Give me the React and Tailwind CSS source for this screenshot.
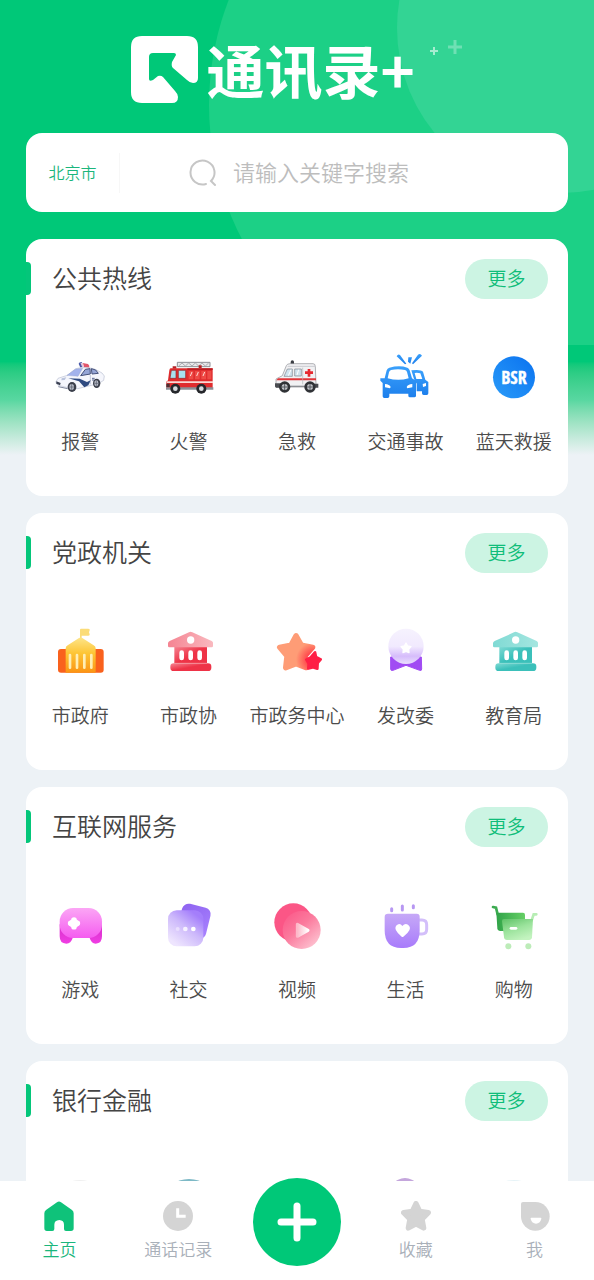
import { useState } from "react";

function PoliceCar() {
  return (
    <svg viewBox="0 0 150 150" className="size-[50px]">
      <path d="M71 32q1-5 8-5 4 1 5 14l-8 3z" fill="#4858a8" />
      <path d="M83 30l16 3q5 4 4 11l-16-1z" fill="#e2556a" />
      <path d="M76 29l8 2 3 11-5 1z" fill="#e9c9da" />
      <path
        d="M3 86l6-10 28-9 24-19c14-6 44-6 62 2l18 10 7 9-2 13-16 10-62 15-26-2-32-8-6-5z"
        fill="#f5f6fc"
        stroke="#b9c0d2"
        strokeWidth="2"
      />
      <path d="M36 67l26-19 21-2-14 24z" fill="#a3b3ec" stroke="#8a97c4" strokeWidth="1" />
      <path d="M77 68l14-19 14-2 1 16zM109 47l13 4 8 10-19 2z" fill="#95a5d6" stroke="#46527c" strokeWidth="3" />
      <path d="M40 76l34 1 22 10 12-6-8 16-12 6-16-18z" fill="#2f4a80" />
      <path d="M106 66v28" stroke="#a9b2c8" strokeWidth="2" />
      <path d="M111 76h8M111 81h7" stroke="#59658f" strokeWidth="3" />
      <path d="M4 85l13 5-2 7-11-5z" fill="#3a4052" />
      <path d="M20 76l14-3-5 8-10 1z" fill="#b9c3dc" />
      <path d="M10 101l28 6" stroke="#7d859b" strokeWidth="3" />
      <ellipse cx="51" cy="102" rx="13" ry="15" fill="#3b3f4b" />
      <ellipse cx="50" cy="102" rx="7" ry="9" fill="#b9bdc9" />
      <path d="M50 93v18M43 102h14" stroke="#555a68" strokeWidth="2" />
      <ellipse cx="125" cy="91" rx="11" ry="14" fill="#3b3f4b" />
      <ellipse cx="124" cy="91" rx="6" ry="9" fill="#b9bdc9" />
      <path d="M124 82v18M118 91h12" stroke="#555a68" strokeWidth="2" />
    </svg>
  );
}

function FireTruck() {
  return (
    <svg viewBox="0 0 150 150" className="size-[50px]">
      <path d="M40 28h98v13H40z" fill="#e8e8ea" stroke="#8d9095" strokeWidth="3" />
      <path d="M44 39l10-9 10 9 10-9 10 9 10-9 10 9 10-9 10 9 10-9" fill="none" stroke="#8d9095" strokeWidth="2" />
      <path d="M26 40h11v7H26zM104 37h9v8h-9z" fill="#b32326" />
      <path d="M20 46h126v62H7V86l5-4 4-30q1-6 4-6z" fill="#e02c2e" />
      <path d="M70 46h76v5H70z" fill="#b81d22" />
      <path d="M22 52h14v24H18zM43 52h22v24H43z" fill="#a8e1ee" stroke="#8f2226" strokeWidth="2" />
      <path d="M74 54h14v25H74zM93 54h14v25H93zM112 54h14v25h-14zM130 54h12v25h-12z" fill="#ee4b46" />
      <path d="M84 57l-5 12M103 57l-5 12M122 57l-5 12" stroke="#ffd9d4" strokeWidth="3" />
      <path d="M9 85h138v5H8z" fill="#f9d9d4" />
      <path d="M6 103h142v7H6z" fill="#8c8f96" />
      <path d="M7 92h10v10H7z" fill="#4a3034" />
      <circle cx="34" cy="107" r="15" fill="#25272b" />
      <circle cx="34" cy="107" r="7" fill="#d7dade" />
      <circle cx="112" cy="107" r="15" fill="#25272b" />
      <circle cx="112" cy="107" r="7" fill="#d7dade" />
    </svg>
  );
}

function Ambulance() {
  return (
    <svg viewBox="0 0 150 150" className="size-[50px]">
      <path d="M56 33v-6a5 5 0 0 1 10 0v6z" fill="#3b3e44" />
      <path
        d="M43 38q2-6 12-6h68q7 0 7 9l2 53v8H12V78l19-10z"
        fill="#f1f1f3"
        stroke="#8b8d92"
        strokeWidth="2"
      />
      <path d="M47 40h82" stroke="#c9cbd0" strokeWidth="3" />
      <path d="M46 48h15v22H36zM68 48h20v21H68z" fill="#cfe3ee" stroke="#7d838c" strokeWidth="2" />
      <path d="M57 50l-8 18M80 50l-5 16" stroke="#fff" strokeWidth="3" />
      <path d="M107 48h8v7h8v8h-8v8h-8v-8h-8v-8h8z" fill="#e62930" />
      <path d="M18 76h114v6H13z" fill="#e0363a" />
      <path d="M92 44v50" stroke="#b4b6bb" strokeWidth="2" />
      <path d="M9 91h20v13H12q-3-1-3-4zM126 92h13v12h-13z" fill="#4a4c51" />
      <path d="M50 100h50" stroke="#8c8e93" strokeWidth="4" />
      <circle cx="38" cy="102" r="17" fill="#303236" />
      <circle cx="38" cy="102" r="9" fill="#c3c5ca" />
      <path d="M38 93v18M29 102h18" stroke="#55585e" strokeWidth="3" />
      <circle cx="114" cy="102" r="17" fill="#303236" />
      <circle cx="114" cy="102" r="9" fill="#c3c5ca" />
      <path d="M114 93v18M105 102h18" stroke="#55585e" strokeWidth="3" />
    </svg>
  );
}

function CarCrash() {
  return (
    <svg viewBox="0 0 150 150" className="size-[50px]">
      <defs>
        <linearGradient id="crash" x1="0" y1="0" x2="0" y2="1">
          <stop offset="0" stopColor="#3aa0fb" />
          <stop offset="1" stopColor="#1d7fec" />
        </linearGradient>
      </defs>
      <g fill="url(#crash)">
        <path d="M50 10q4-8 10-4l19 26-4 2zM85 13h11l-5 19-7-6zM114 5q7-5 12 3L99 34l-3-3z" />
        <path
          fillRule="evenodd"
          d="M94 52q28-4 35 4l7 24 9 7v34q0 5-5 5h-9q-5 0-5-5v-6h-16V92l-8-14zM104 60l5 18h18l-6-17q-9-3-17-1z"
        />
        <path
          fillRule="evenodd"
          d="M28 44q31-8 54 0 5 2 7 8l7 24 12 7v45q0 5-5 5H90q-5 0-5-5v-6H28v8q0 5-5 5H13q-5 0-5-5V90l-7-7v-7h13l6-24q2-6 8-8zM33 51q-5 2-6 7l-4 18q32 9 63 0l-5-19q-1-5-6-6-21-5-42 0z"
        />
      </g>
      <path d="M15 93q14 1 17 9l-2 4-15-3zM97 93q-14 1-17 9l2 4 15-3zM128 93l10-3v9l-9 3z" fill="#fff" />
    </svg>
  );
}

function BlueSky() {
  return (
    <svg viewBox="0 0 150 150" className="size-[50px]">
      <defs>
        <linearGradient id="bsr" x1="0" y1="1" x2="1" y2="0">
          <stop offset="0" stopColor="#2a9bf8" />
          <stop offset="1" stopColor="#0a72f0" />
        </linearGradient>
      </defs>
      <circle cx="75" cy="73" r="63" fill="url(#bsr)" />
      <text
        x="75"
        y="92"
        textAnchor="middle"
        fontSize="54"
        fontWeight="700"
        fontFamily="'Liberation Sans Narrow', 'Open Sans Condensed', 'Liberation Sans', sans-serif"
        fill="#fff"
        stroke="#fff"
        strokeWidth="1"
      >
        BSR
      </text>
    </svg>
  );
}

function CityHall() {
  return (
    <svg viewBox="0 0 150 150" className="size-[50px]">
      <defs>
        <linearGradient id="hall" x1="0" y1="0" x2="0" y2="1">
          <stop offset="0" stopColor="#fde58a" />
          <stop offset="0.45" stopColor="#fdc534" />
          <stop offset="1" stopColor="#fb9414" />
        </linearGradient>
      </defs>
      <path d="M78 5h22q6 0 4 5l-2 6 2 6q1 4-4 4H80v12h-5V9q0-4 3-4z" fill="#fbdc78" />
      <rect x="9" y="66" width="137" height="71" rx="9" fill="#f9611d" />
      <path d="M32 64q0-6 6-9l34-22q5-3 10 0l34 22q6 3 6 9v73H32z" fill="url(#hall)" />
      <path d="M45 84v38M66 84v38M88 84v38M109 84v38" stroke="#ffeeb4" strokeWidth="8" strokeLinecap="round" />
    </svg>
  );
}

function Temple({ id, light, mid, dark }) {
  return (
    <svg viewBox="0 0 150 150" className="size-[50px]">
      <defs>
        <linearGradient id={id} x1="0" y1="0" x2="1" y2="1">
          <stop offset="0" stopColor={mid} />
          <stop offset="0.5" stopColor={dark} />
          <stop offset="1" stopColor={dark} />
        </linearGradient>
        <linearGradient id={id + "Roof"} x1="0" y1="0" x2="1" y2="0">
          <stop offset="0" stopColor={mid} />
          <stop offset="1" stopColor={light} />
        </linearGradient>
      </defs>
      <path d="M31 58h98v54H31z" fill={"url(#" + id + ")"} />
      <path d="M75 16q5-3 10 0l58 26q5 3 4 7v8q0 4-4 4H16q-4 0-4-4v-8q0-5 5-7z" fill={"url(#" + id + "Roof)"} />
      <circle cx="80" cy="39" r="11" fill="#fff" />
      <path d="M53 77v16M80 77v16M107 77v16" stroke="#fff" strokeWidth="14" strokeLinecap="round" />
      <rect x="19" y="109" width="123" height="23" rx="10" fill={"url(#" + id + ")"} />
      <path d="M31 109h98" stroke={light} strokeWidth="2" />
    </svg>
  );
}

function StarPair() {
  return (
    <svg viewBox="0 0 150 150" className="size-[50px]">
      <defs>
        <radialGradient id="starGlow" gradientUnits="userSpaceOnUse" cx="124" cy="98" r="52">
          <stop offset="0.2" stopColor="#ff3040" />
          <stop offset="1" stopColor="#fe9c76" />
        </radialGradient>
      </defs>
      {/* stroke and fill share the gradient so the rounded corners blend in */}
      <path
        d="M72 26l16 28 34 7-23 26 4 35-31-12-31 12 4-35-22-26 34-7z"
        fill="url(#starGlow)"
        stroke="url(#starGlow)"
        strokeWidth="16"
        strokeLinejoin="round"
      />
      <path
        d="M129 76l3 14 14 7-9 11-1 17-14-4-13 3 1-14-7-12 13-7z"
        fill="#ff1f45"
        stroke="#ff1f45"
        strokeWidth="8"
        strokeLinejoin="round"
      />
    </svg>
  );
}

function Medal() {
  return (
    <svg viewBox="0 0 150 150" className="size-[50px]">
      <defs>
        <linearGradient id="medal" x1="0" y1="0" x2="0" y2="1">
          <stop offset="0" stopColor="#f6f2fe" />
          <stop offset="0.5" stopColor="#f1eafe" />
          <stop offset="0.78" stopColor="#d6bcfb" />
          <stop offset="1" stopColor="#eadffd" />
        </linearGradient>
      </defs>
      <path
        d="M32 90h92l1 36q0 6-6 4l-41-15-39 15q-7 2-7-4z"
        fill="#a14cf3"
        stroke="#a14cf3"
        strokeWidth="3"
        strokeLinejoin="round"
      />
      <circle cx="78" cy="58" r="53" fill="url(#medal)" />
      <path
        d="M78 48l5 9 10 2-7 8 1 10-9-4-9 4 1-10-7-8 10-2z"
        fill="#fff"
        stroke="#fff"
        strokeWidth="4"
        strokeLinejoin="round"
      />
    </svg>
  );
}

function Gamepad() {
  return (
    <svg viewBox="0 0 150 150" className="size-[50px]">
      <defs>
        <linearGradient id="pad" x1="0" y1="0" x2="0" y2="1">
          <stop offset="0" stopColor="#fba6f5" />
          <stop offset="1" stopColor="#f55cf0" />
        </linearGradient>
        <linearGradient id="padFoot" x1="0" y1="0" x2="0" y2="1">
          <stop offset="0" stopColor="#d530c8" />
          <stop offset="1" stopColor="#f03de4" />
        </linearGradient>
      </defs>
      <path d="M14 70h127v36q0 22-19 22-13 0-18-17H53q-5 17-19 17-20 0-20-22z" fill="url(#padFoot)" />
      <rect x="14" y="21" width="127" height="90" rx="40" fill="url(#pad)" />
      <path d="M57 57v20M47 67h20" stroke="#fff" strokeWidth="17" strokeLinecap="round" />
      <rect x="46" y="56" width="22" height="22" rx="2" fill="#fff" />
    </svg>
  );
}

function Chat() {
  return (
    <svg viewBox="0 0 150 150" className="size-[50px]">
      <defs>
        <linearGradient id="chatBack" x1="0" y1="0" x2="1" y2="1">
          <stop offset="0" stopColor="#8e63f0" />
          <stop offset="1" stopColor="#a983ff" />
        </linearGradient>
        <linearGradient id="chatFront" x1="0.9" y1="0.2" x2="0.3" y2="1">
          <stop offset="0" stopColor="#a47efb" />
          <stop offset="0.45" stopColor="#cdb9fb" />
          <stop offset="1" stopColor="#eee5fe" />
        </linearGradient>
      </defs>
      <rect x="46" y="13" width="88" height="96" rx="20" transform="rotate(14 90 61)" fill="url(#chatBack)" />
      <rect x="12" y="28" width="106" height="108" rx="26" fill="url(#chatFront)" />
      <circle cx="41" cy="84" r="6" fill="#e9defe" />
      <circle cx="64" cy="84" r="7" fill="#f6f1ff" />
      <circle cx="88" cy="84" r="7" fill="#fff" />
    </svg>
  );
}

function Video() {
  return (
    <svg viewBox="0 0 150 150" className="size-[50px]">
      <defs>
        <linearGradient id="disc" x1="0.1" y1="0.1" x2="0.8" y2="0.9">
          <stop offset="0" stopColor="#fb5c8b" />
          <stop offset="0.45" stopColor="#fb7a9d" />
          <stop offset="1" stopColor="#fdbccc" />
        </linearGradient>
        <linearGradient id="play" x1="1" y1="0" x2="0" y2="0">
          <stop offset="0" stopColor="#fff" />
          <stop offset="1" stopColor="#fdb9c9" />
        </linearGradient>
      </defs>
      <circle cx="64" cy="64" r="57" fill="#fb5686" />
      <circle cx="89" cy="87" r="57" fill="url(#disc)" />
      <path
        d="M76 70v36l32-18z"
        fill="url(#play)"
        stroke="url(#play)"
        strokeWidth="9"
        strokeLinejoin="round"
      />
    </svg>
  );
}

function Mug() {
  return (
    <svg viewBox="0 0 150 150" className="size-[50px]">
      <defs>
        <linearGradient id="mug" x1="0" y1="0" x2="0" y2="1">
          <stop offset="0" stopColor="#c6a9f7" />
          <stop offset="1" stopColor="#a87bfb" />
        </linearGradient>
      </defs>
      <path d="M35 23v6M67 15v12M100 14v6" stroke="#b797f2" strokeWidth="9" strokeLinecap="round" />
      <path d="M116 57h10q14 0 14 14v14q0 14-14 14h-12" fill="none" stroke="#d3bffa" strokeWidth="9" />
      <path d="M24 38h86q9 0 9 9v41q0 53-49 53h-7q-49 0-49-53V47q0-9 10-9z" fill="url(#mug)" />
      <path
        d="M67 75q8-9 17-4 9 7 4 17-4 9-18 19-2 2-5 0-13-10-17-19-5-11 4-17 9-5 15 4z"
        fill="#fff"
      />
    </svg>
  );
}

function Cart() {
  return (
    <svg viewBox="0 0 150 150" className="size-[50px]">
      <defs>
        <linearGradient id="cartBack" x1="0" y1="0" x2="1" y2="0">
          <stop offset="0" stopColor="#30a348" />
          <stop offset="1" stopColor="#66cf66" />
        </linearGradient>
        <linearGradient id="cartFront" x1="0.1" y1="0" x2="0.6" y2="1">
          <stop offset="0" stopColor="#63c46b" />
          <stop offset="0.5" stopColor="#9be39c" />
          <stop offset="1" stopColor="#c3f3bf" />
        </linearGradient>
      </defs>
      <path d="M12 18l9 2 5 20" fill="none" stroke="#3cab51" strokeWidth="8" strokeLinecap="round" />
      <path d="M22 35h80q6 0 6 6v49H34q-8 0-9-8z" fill="url(#cartBack)" />
      <path d="M142 40h-8l-6 18" fill="none" stroke="#b7edb4" strokeWidth="8" strokeLinecap="round" />
      <path d="M39 60q0-6 6-6h87l-3 55q-1 8-9 8H54q-8 0-9-8z" fill="url(#cartFront)" />
      <path d="M66 82h15" stroke="#fff" strokeWidth="8" strokeLinecap="round" />
      <circle cx="58" cy="136" r="9" fill="#bdecb9" />
      <circle cx="118" cy="136" r="9" fill="#bdecb9" />
    </svg>
  );
}

function BankBadge({ color, rx, ry }) {
  return (
    <svg viewBox="0 0 50 50" className="size-[50px]">
      <ellipse cx="25" cy="25" rx={rx} ry={ry} fill={color} />
    </svg>
  );
}

const sections = [
  {
    title: "公共热线",
    items: [
      { label: "报警", icon: <PoliceCar /> },
      { label: "火警", icon: <FireTruck /> },
      { label: "急救", icon: <Ambulance /> },
      { label: "交通事故", icon: <CarCrash /> },
      { label: "蓝天救援", icon: <BlueSky /> },
    ],
  },
  {
    title: "党政机关",
    items: [
      { label: "市政府", icon: <CityHall /> },
      { label: "市政协", icon: <Temple id="cppcc" light="#f9b9bf" mid="#f58492" dark="#ee3347" /> },
      { label: "市政务中心", icon: <StarPair /> },
      { label: "发改委", icon: <Medal /> },
      { label: "教育局", icon: <Temple id="edu" light="#a5e6e0" mid="#7fdad4" dark="#3bc0ba" /> },
    ],
  },
  {
    title: "互联网服务",
    items: [
      { label: "游戏", icon: <Gamepad /> },
      { label: "社交", icon: <Chat /> },
      { label: "视频", icon: <Video /> },
      { label: "生活", icon: <Mug /> },
      { label: "购物", icon: <Cart /> },
    ],
  },
  {
    title: "银行金融",
    items: [
      { icon: <BankBadge color="#f0f0f0" rx="25" ry="20" /> },
      { icon: <BankBadge color="#7db9c6" rx="25" ry="21" /> },
      { icon: <BankBadge color="#ffffff" rx="22" ry="20" /> },
      { icon: <BankBadge color="#c4a6dc" rx="18" ry="22" /> },
      { icon: <BankBadge color="#e6f3f7" rx="25" ry="20" /> },
    ],
  },
];

function Backdrop() {
  return (
    <div className="absolute inset-x-0 top-0">
      <svg
        viewBox="0 0 594 345"
        preserveAspectRatio="xMidYMin slice"
        className="block h-[345px] w-full bg-[#00c878]"
      >
        <circle cx="499" cy="105" r="290" fill="#1cd086" />
        <circle cx="562" cy="28" r="165" fill="#33d494" />
        <path d="M434 47v8M430 51h8" stroke="#a6ecd0" strokeWidth="2" />
        <path d="M455 40v14M448 47h14" stroke="#6fe0b4" strokeWidth="3" />
      </svg>
      <div className="h-[110px] bg-linear-to-b from-[#00c878] from-15% via-[#58d7a1] via-50% to-[#edf2f6]"></div>
    </div>
  );
}

function Section({ title, items }) {
  return (
    <section className="relative h-[257px] rounded-2xl bg-white pt-5">
      <span className="absolute left-0 top-[23px] h-[33px] w-[5px] rounded-r bg-[#04c67a]"></span>
      <div className="flex h-10 items-center justify-between pl-[26px] pr-5">
        <h2 className="pb-1 text-[25px] leading-9 text-[#444]">{title}</h2>
        <button className="h-10 w-[83px] rounded-full bg-[#ccf4e3] pb-0.5 text-[19px] text-[#0fbd79]">
          更多
        </button>
      </div>
      <ul className="mt-[54px] grid grid-cols-5">
        {items.map((item, i) => (
          <li key={i}>
            <a href="#" className="flex flex-col items-center gap-6">
              {item.icon}
              {item.label && (
                <span className="whitespace-nowrap text-[19px] leading-7 text-[#4c4c4c]">
                  {item.label}
                </span>
              )}
            </a>
          </li>
        ))}
      </ul>
    </section>
  );
}

const tabs = [
  {
    id: "home",
    label: "主页",
    icon: <path d="M39 4q6-5 12 0l32 22q6 4 6 11v45q0 8-8 8H66q-6 0-6-6V71q0-13-14-14-15 1-15 14v13q0 6-6 6H9q-8 0-8-8V37q0-7 6-11z" />,
  },
  {
    id: "calls",
    label: "通话记录",
    icon: (
      <>
        <circle cx="45" cy="45" r="45" />
        <path d="M44 22v24h24" fill="none" stroke="#fff" strokeWidth="9" />
      </>
    ),
  },
  null,
  {
    id: "favorites",
    label: "收藏",
    icon: (
      <path
        d="M45 8l11 23 26 4-19 19 5 27-23-12-23 12 5-27L8 35l26-4z"
        stroke="currentColor"
        strokeWidth="16"
        strokeLinejoin="round"
      />
    ),
  },
  {
    id: "me",
    label: "我",
    icon: (
      <>
        <path d="M9 3h37a43 43 0 1 1-43 43V9q0-6 6-6z" />
        <path d="M34 50h28q3 0 2 4-4 14-16 14t-16-14q-1-4 2-4z" fill="#fff" />
      </>
    ),
  },
];

export default function App() {
  const [active, setActive] = useState("home");
  const [keyword, setKeyword] = useState("");

  return (
    <div className="flex h-screen flex-col bg-[#edf2f6] font-['Noto_Sans_CJK_SC',sans-serif] font-[350]">
      <main className="relative flex-1 overflow-y-auto [scrollbar-width:none]">
        <Backdrop />
        <div className="relative px-[26px] pb-4 pt-9">
          <h1 className="mr-12 flex items-center justify-center gap-2 text-white">
            <svg viewBox="0 0 67 67" className="size-[67px]" fill="currentColor">
              <path d="M11 0h45q11 0 11 11v31q0 5-5 5-3 0-6-3L42 32q-2-2-1-6l4-7q0-2-2-2H22q-4 0-4 4v22q0 3 4 1l5-4q3-1 5 1l12 14q3 3 3 6 0 6-6 6H11Q0 67 0 56V11Q0 0 11 0z" />
            </svg>
            <span className="text-[58px] font-bold leading-[67px]">通讯录+</span>
          </h1>

          <div className="mt-[30px] flex h-[79px] items-center rounded-2xl bg-white">
            <button className="h-10 w-[94px] border-r border-[#f7f7f7] pb-0.5 text-base text-[#1bb67c]">
              北京市
            </button>
            <label className="flex flex-1 items-center gap-4 pl-[69px]">
              <svg
                viewBox="0 0 28 28"
                className="size-7 shrink-0"
                fill="none"
                stroke="#c6c6c6"
                strokeWidth="2"
                strokeLinecap="round"
              >
                <path d="M17 25A12 12 0 1 1 22 22l4 4" />
              </svg>
              <input
                type="text"
                aria-label="搜索"
                value={keyword}
                onChange={(e) => setKeyword(e.target.value)}
                placeholder="请输入关键字搜索"
                className="w-full min-w-0 pb-1 text-[22px] leading-8 text-[#444] outline-none placeholder:text-[#bdbdbd]"
              />
            </label>
          </div>

          <div className="mt-[27px] flex flex-col gap-[17px]">
            {sections.map((section) => (
              <Section key={section.title} {...section} />
            ))}
          </div>
        </div>
      </main>

      <nav className="relative grid h-[99px] shrink-0 grid-cols-5 bg-white">
        {tabs.map((tab) =>
          tab ? (
            <button
              key={tab.id}
              onClick={() => setActive(tab.id)}
              className={`flex flex-col items-center gap-1.5 pt-5 ${
                active === tab.id ? "text-[#0fc27a]" : "text-[#d4d4d4]"
              }`}
            >
              <svg viewBox="0 0 90 90" className="size-[30px]" fill="currentColor">
                {tab.icon}
              </svg>
              <span
                className={`text-[17px] leading-6 ${
                  active === tab.id ? "text-[#1bb67c]" : "text-[#a9b0b9]"
                }`}
              >
                {tab.label}
              </span>
            </button>
          ) : (
            <div key="add" className="flex justify-center">
              <button
                aria-label="添加"
                className="-mt-[3px] flex size-[88px] items-center justify-center rounded-full bg-[#00c878]"
              >
                <svg
                  viewBox="0 0 40 40"
                  className="size-10"
                  stroke="#fff"
                  strokeWidth="7"
                  strokeLinecap="round"
                >
                  <path d="M20 4v32M4 20h32" />
                </svg>
              </button>
            </div>
          )
        )}
      </nav>
    </div>
  );
}
